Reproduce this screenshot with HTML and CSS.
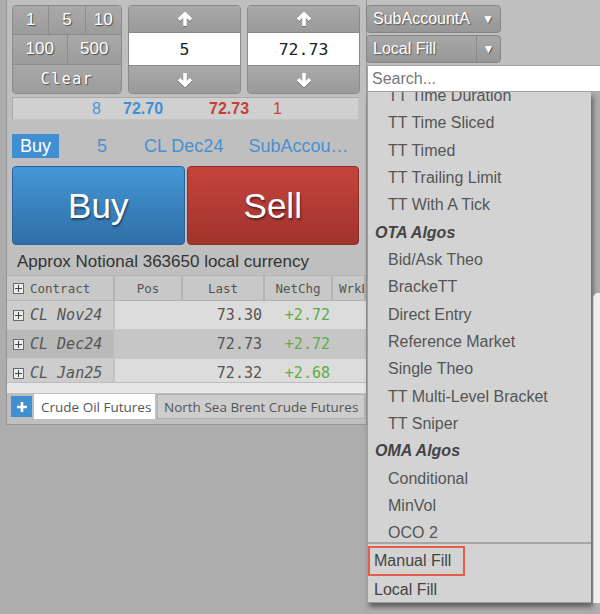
FILE: index.html
```html
<!DOCTYPE html>
<html>
<head>
<meta charset="utf-8">
<link rel="stylesheet" href="styles.css">
</head>
<body>
<div class="screen">
  <div class="panel">
    <div class="top-row">
      <div class="qty-pad">
        <div class="pad-row"><div class="pad-btn">1</div><div class="pad-btn">5</div><div class="pad-btn">10</div></div>
        <div class="pad-row"><div class="pad-btn">100</div><div class="pad-btn">500</div></div>
        <div class="pad-row"><div class="pad-btn clear">Clear</div></div>
      </div>
      <div class="spinner">
        <div class="spin-btn up"><svg width="16" height="16" viewBox="0 0 16 16"><path d="M2 8.8 L8 2.8 L14 8.8" fill="none" stroke="#fff" stroke-width="3.4"/><path d="M8 4 V15" stroke="#fff" stroke-width="3.6"/></svg></div>
        <div class="spin-val">5</div>
        <div class="spin-btn down"><svg width="16" height="16" viewBox="0 0 16 16"><path d="M2 7.2 L8 13.2 L14 7.2" fill="none" stroke="#fff" stroke-width="3.4"/><path d="M8 1 V12" stroke="#fff" stroke-width="3.6"/></svg></div>
      </div>
      <div class="spinner">
        <div class="spin-btn up"><svg width="16" height="16" viewBox="0 0 16 16"><path d="M2 8.8 L8 2.8 L14 8.8" fill="none" stroke="#fff" stroke-width="3.4"/><path d="M8 4 V15" stroke="#fff" stroke-width="3.6"/></svg></div>
        <div class="spin-val">72.73</div>
        <div class="spin-btn down"><svg width="16" height="16" viewBox="0 0 16 16"><path d="M2 7.2 L8 13.2 L14 7.2" fill="none" stroke="#fff" stroke-width="3.4"/><path d="M8 1 V12" stroke="#fff" stroke-width="3.6"/></svg></div>
      </div>
    </div>

    <div class="market-row">
      <span class="bid-qty">8</span>
      <span class="bid">72.70</span>
      <span class="ask">72.73</span>
      <span class="ask-qty">1</span>
    </div>

    <div class="order-info">
      <span class="side-badge">Buy</span>
      <span class="oi-qty">5</span>
      <span class="oi-contract">CL Dec24</span>
      <span class="oi-account">SubAccou…</span>
    </div>

    <div class="trade-btns">
      <div class="trade buy">Buy</div>
      <div class="trade sell">Sell</div>
    </div>

    <div class="notional">Approx Notional 363650 local currency</div>

    <div class="bottom">
      <div class="grid">
        <div class="hcell contract"><span class="pbox"></span>Contract</div>
        <div class="hcell center">Pos</div>
        <div class="hcell center">Last</div>
        <div class="hcell center">NetChg</div>
        <div class="hcell">WrkB</div>

        <div class="cell contract"><span class="pbox"></span>CL Nov24</div>
        <div class="cell"></div>
        <div class="cell num">73.30</div>
        <div class="cell num green">+2.72</div>
        <div class="cell"></div>

        <div class="cell contract sel"><span class="pbox"></span>CL Dec24</div>
        <div class="cell sel"></div>
        <div class="cell num sel">72.73</div>
        <div class="cell num green sel">+2.72</div>
        <div class="cell sel"></div>

        <div class="cell contract"><span class="pbox"></span>CL Jan25</div>
        <div class="cell"></div>
        <div class="cell num">72.32</div>
        <div class="cell num green">+2.68</div>
        <div class="cell"></div>
      </div>
      <div class="hscroll"></div>
      <div class="tabs">
        <div class="tab-add"><svg width="12" height="12" viewBox="0 0 12 12"><path d="M6 1 V11 M1 6 H11" stroke="#fff" stroke-width="2.6"/></svg></div>
        <div class="tab active">Crude Oil Futures</div>
        <div class="tab">North Sea Brent Crude Futures</div>
        <div class="tab rest"></div>
      </div>
    </div>
  </div>

  <div class="side">
    <div class="side-top">
      <div class="select">
        <span class="sel-text">SubAccountA</span>
        <span class="sel-arrow">▼</span>
      </div>
      <div class="select split">
        <span class="sel-text">Local Fill</span>
        <span class="sel-arrow">▼</span>
      </div>
    </div>
    <div class="search">Search...</div>
    <div class="menu-row">
      <div class="menu">
        <div class="menu-scroll">
          <div class="item first">TT Time Duration</div>
          <div class="item">TT Time Sliced</div>
          <div class="item">TT Timed</div>
          <div class="item">TT Trailing Limit</div>
          <div class="item">TT With A Tick</div>
          <div class="group">OTA Algos</div>
          <div class="item">Bid/Ask Theo</div>
          <div class="item">BrackeTT</div>
          <div class="item">Direct Entry</div>
          <div class="item">Reference Market</div>
          <div class="item">Single Theo</div>
          <div class="item">TT Multi-Level Bracket</div>
          <div class="item">TT Sniper</div>
          <div class="group">OMA Algos</div>
          <div class="item">Conditional</div>
          <div class="item">MinVol</div>
          <div class="item">OCO 2</div>
        </div>
        <div class="menu-foot">
          <div class="foot-item hl"><span class="highlight">Manual Fill</span></div>
          <div class="foot-item plain">Local Fill</div>
        </div>
      </div>
      <div class="strip"></div>
    </div>
  </div>
</div>
</body>
</html>
```

FILE: styles.css
```css
* { box-sizing: border-box; }
html, body { margin: 0; padding: 0; }
body {
  width: 600px;
  height: 614px;
  overflow: hidden;
  background: #adadad;
  font-family: "Liberation Sans", Arial, sans-serif;
}
.screen {
  display: flex;
  align-items: flex-start;
}
.panel {
  margin-left: 6px;
  width: 361px;
  height: 425px;
  flex: none;
  background: #bfbfbf;
  border-left: 1px solid #959595;
  border-right: 1px solid #959595;
  border-bottom: 1px solid #959595;
  padding: 5px 5px 0 5px;
  display: flex;
  flex-direction: column;
}

/* top row */
.top-row { display: flex; gap: 6px; height: 89px; }
.qty-pad {
  width: 110px;
  border: 1px solid #8a8a8a;
  border-radius: 4px;
  overflow: hidden;
  display: flex;
  flex-direction: column;
}
.pad-row { display: flex; flex: 1; }
.pad-row + .pad-row { border-top: 1px solid #8c8c8c; }
.pad-btn {
  flex: 1;
  display: flex;
  align-items: center;
  justify-content: center;
  background: linear-gradient(#a9a9a9, #9c9c9c);
  color: #fff;
  font-size: 17px;
  text-shadow: 1px 1px 1px #4a4a4a;
}
.pad-btn + .pad-btn { border-left: 1px solid #8c8c8c; }
.pad-btn.clear {
  font-family: "DejaVu Sans Mono", monospace;
  font-size: 15px;
  letter-spacing: 1.5px;
}
.spinner {
  width: 113px;
  border: 1px solid #8a8a8a;
  border-radius: 4px;
  overflow: hidden;
  display: flex;
  flex-direction: column;
}
.spin-btn {
  display: flex;
  align-items: center;
  justify-content: center;
  background: linear-gradient(#a9a9a9, #9a9a9a);
}
.spin-btn svg { filter: drop-shadow(0 1px 0 rgba(0,0,0,0.3)); }
.spin-btn.up { height: 27px; border-bottom: 1px solid #8a8a8a; }
.spin-btn.down { flex: 1; border-top: 1px solid #8a8a8a; }
.spin-val {
  height: 32px;
  background: #fff;
  display: flex;
  align-items: center;
  justify-content: center;
  font-family: "DejaVu Sans Mono", monospace;
  font-size: 16.5px;
  color: #222;
}

/* market row */
.market-row {
  margin-top: 3px;
  height: 23px;
  width: 347px;
  background: #d0d0d0;
  border: 1px solid #aaa;
  border-right-color: #c4c4c4;
  border-bottom-color: #c4c4c4;
  display: flex;
  align-items: center;
  font-size: 16px;
}
.bid-qty { width: 88px; text-align: right; color: #4a93d6; }
.bid { margin-left: 22px; color: #4190d4; font-weight: bold; }
.ask { margin-left: 46px; color: #c4413a; font-weight: bold; }
.ask-qty { margin-left: 24px; color: #c4413a; }

/* order info */
.order-info {
  margin-top: 14px;
  height: 24px;
  display: flex;
  align-items: center;
  font-size: 18px;
  color: #4a90d0;
  white-space: nowrap;
}
.side-badge {
  width: 47px;
  height: 24px;
  background: #3f8fd2;
  color: #fff;
  display: flex;
  align-items: center;
  justify-content: center;
}
.oi-qty { margin-left: 38px; }
.oi-contract { margin-left: 37px; }
.oi-account { margin-left: 25px; }

/* trade buttons */
.trade-btns {
  margin-top: 8px;
  height: 79px;
  display: flex;
  gap: 2px;
  width: 347px;
}
.trade {
  flex: 1;
  border-radius: 4px;
  display: flex;
  align-items: center;
  justify-content: center;
  color: #fff;
  font-size: 35px;
  text-shadow: 1px 2px 2px rgba(0,0,0,0.45);
}
.trade.buy {
  background: linear-gradient(#4696d6, #2e6fa6);
  border: 1px solid #2d6397;
}
.trade.sell {
  background: linear-gradient(#c5443c, #a0332d);
  border: 1px solid #8d2e28;
}

.notional {
  height: 30px;
  padding: 7px 0 0 5px;
  line-height: 20px;
  font-size: 17px;
  color: #333;
  white-space: nowrap;
}

/* bottom grid */
.bottom { margin: 0 -5px; }
.grid {
  display: grid;
  grid-template-columns: 108px 68px 82px 68px 1fr;
  grid-template-rows: 26px 29px 29px 29px;
  height: 107px;
  overflow: hidden;
  font-family: "DejaVu Sans Mono", monospace;
  color: #555;
}
.hcell {
  background: #c8c8c8;
  border-top: 1px solid #b5b5b5;
  border-right: 2px solid #b3b3b3;
  border-bottom: 1px solid #b3b3b3;
  font-size: 12.5px;
  display: flex;
  align-items: center;
  padding-left: 6px;
  white-space: nowrap;
  overflow: hidden;
}
.hcell.center { justify-content: center; padding-left: 0; }
.pbox {
  width: 11px;
  height: 11px;
  border: 1px solid #6a6a6a;
  background:
    linear-gradient(#444, #444) center / 7px 1px no-repeat,
    linear-gradient(#444, #444) center / 1px 7px no-repeat,
    #ececec;
  margin-right: 6px;
  flex: none;
}
.cell {
  background: #dcdcdc;
  border-bottom: 1px solid #c8c8c8;
  font-size: 15px;
  display: flex;
  align-items: center;
  white-space: nowrap;
}
.cell.contract {
  background: #cdcdcd;
  font-style: italic;
  padding-left: 6px;
  border-right: 2px solid #c2c2c2;
}
.cell.sel { background: #c6c6c6; }
.cell.contract.sel { background: #b9b9b9; }
.cell.num { justify-content: flex-end; padding-right: 3px; }
.cell.green { color: #5dad45; }

.hscroll {
  height: 11px;
  background: #e6e6e6;
  border-top: 1px solid #bdbdbd;
}
.tabs {
  height: 26px;
  display: flex;
  align-items: stretch;
  padding: 1px 0 0 4px;
  gap: 2px;
  font-family: "Open Sans", sans-serif;
  font-size: 13.5px;
  color: #555;
  overflow: hidden;
}
.tab-add {
  flex: none;
  width: 21px;
  height: 21px;
  margin-top: 2px;
  background: #3f8fd2;
  display: flex;
  align-items: center;
  justify-content: center;
}
.tab {
  flex: none;
  height: 25px;
  padding: 0 6px;
  display: flex;
  align-items: center;
  background: #cdcdcd;
  border: 1px solid #b0b0b0;
  white-space: nowrap;
}
.tab.active { background: #fff; border-color: #fff; width: 121px; }
.tab.rest { flex: 1 0 20px; padding: 0; }

/* side column */
.side {
  width: 233px;
  flex: none;
  display: flex;
  flex-direction: column;
}
.side-top {
  background: #bfbfbf;
  padding: 5px 0 0 0;
  height: 65px;
}
.select {
  margin-left: -1px;
  width: 135px;
  height: 28px;
  border: 1px solid #858585;
  border-radius: 4px;
  background: linear-gradient(#a8a8a8, #979797);
  color: #fff;
  text-shadow: 1px 1px 1px #555;
  font-size: 16px;
  display: flex;
  align-items: center;
  padding-left: 6px;
}
.select + .select { margin-top: 2px; }
.sel-text { flex: 1; white-space: nowrap; }
.sel-arrow { width: 24px; font-size: 12px; text-align: center; }
.select.split .sel-arrow {
  align-self: stretch;
  display: flex;
  align-items: center;
  justify-content: center;
  border-left: 1px solid #8a8a8a;
}
.search {
  height: 27px;
  background: #fff;
  border: 1px solid #a4a4a4;
  border-right: none;
  color: #777;
  font-size: 16px;
  padding-left: 4px;
  display: flex;
  align-items: center;
}
.menu-row { display: flex; align-items: flex-start; gap: 2px; }
.menu {
  width: 224px;
  height: 511px;
  background: #d3d3d3;
  border-left: 1px solid #a0a0a0;
  border-bottom: 1px solid #9a9a9a;
  box-shadow: 2px 4px 5px rgba(0,0,0,0.45);
  display: flex;
  flex-direction: column;
  font-size: 16px;
}
.menu-scroll {
  height: 454px;
  overflow: hidden;
  border-bottom: 2px solid #a5a5a5;
  padding-top: 1px;
}
.item {
  height: 27.33px;
  line-height: 27.33px;
  padding-left: 20px;
  color: #555;
  white-space: nowrap;
}
.item.first { margin-top: -11px; }
.group {
  height: 27.33px;
  line-height: 27.33px;
  padding-left: 7px;
  color: #444;
  font-weight: bold;
  font-style: italic;
}
.menu-foot { flex: 1; display: flex; flex-direction: column; }
.foot-item {
  height: 25px;
  display: flex;
  align-items: center;
  color: #444;
  white-space: nowrap;
}
.foot-item.hl { height: 33px; align-items: flex-start; }
.foot-item.plain { padding-left: 6px; }
.highlight {
  display: inline-flex;
  align-items: center;
  height: 30px;
  width: 97px;
  padding-left: 4px;
  border: 2px solid #e45d4b;
  margin-top: 2px;
}
.strip {
  flex: 1;
  margin-top: 201px;
  height: 310px;
  background: #efefef;
  border-top-left-radius: 5px;
  border-left: 1px solid #cfcfcf;
}
```
